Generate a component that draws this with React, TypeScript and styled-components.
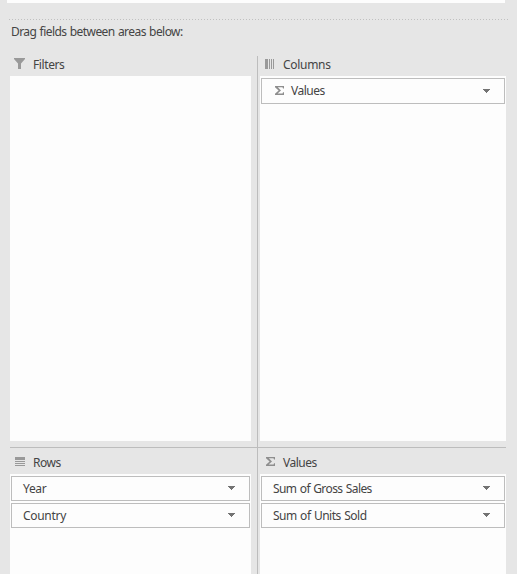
import React from "react";
import styled, { createGlobalStyle } from "styled-components";

const GlobalStyle = createGlobalStyle`
  *, *::before, *::after { box-sizing: border-box; }
  html, body { margin: 0; background: #e6e6e6; overflow: hidden; }
  body { font: 12px/16px "Noto Sans", sans-serif; color: #444; }
  svg { display: block; flex: none; }
`;

const Pane = styled.main`
  height: 574px;
  display: flex;
  flex-direction: column;
  background: #e6e6e6;
  overflow: hidden;
`;

const FieldListEdge = styled.div`
  flex: none;
  width: 498px;
  height: 3px;
  margin-left: 7px;
  background: #fdfdfd;
`;

const DottedRule = styled.div`
  flex: none;
  height: 1px;
  width: 499px;
  margin: 16px 0 0 9px;
  background: repeating-linear-gradient(90deg, #c0c0c0 0 1px, transparent 1px 3px);
`;

const Label = styled.span<{ $track?: number }>`
  letter-spacing: ${(p) => p.$track ?? -0.3}px;
  word-spacing: 0.7px;
  white-space: nowrap;
`;

const Hint = styled.div`
  flex: none;
  height: 36px;
  padding: 4px 0 0 11px;
`;

const Areas = styled.div`
  flex: 1;
  min-height: 0;
  display: grid;
  grid-template-columns: 248px 248px;
  grid-template-rows: 392px 1fr;
  margin-left: 10px;
`;

const Area = styled.section<{ $left?: boolean; $top?: boolean }>`
  display: flex;
  flex-direction: column;
  min-height: 0;
  padding: 0 ${(p) => (p.$left ? 6 : 0)}px ${(p) => (p.$top ? 6 : 0)}px ${(p) => (p.$left ? 0 : 2)}px;
  border-right: ${(p) => (p.$left ? "1px solid #bdbdbd" : "0")};
  border-bottom: ${(p) => (p.$top ? "1px solid #bdbdbd" : "0")};
`;

const AreaHeader = styled.header<{ $height: number }>`
  flex: none;
  display: flex;
  align-items: flex-start;
  height: ${(p) => p.$height}px;
`;

const HeaderIcon = styled.span<{ $inset: number; $top: number }>`
  width: 23px;
  padding: ${(p) => p.$top}px 0 0 ${(p) => p.$inset}px;
`;

const HeaderText = styled.span<{ $top: number }>`
  padding-top: ${(p) => p.$top}px;
`;

const DropZone = styled.div`
  flex: 1;
  min-height: 0;
  display: flex;
  flex-direction: column;
  gap: 2px;
  padding: 2px 1px;
  background: #fdfdfd;
`;

const Chip = styled.div<{ $height: number }>`
  flex: none;
  height: ${(p) => p.$height}px;
  display: flex;
  align-items: flex-start;
  border: 1px solid #bdbdbd;
  padding: 4px 14px 0 11px;
`;

const ChipIcon = styled.span`
  padding: 3px 7px 0 2px;
`;

const ChipArrow = styled.span<{ $top: number }>`
  margin-left: auto;
  padding-top: ${(p) => p.$top}px;
`;

const FilterIcon = () => (
  <svg width="12" height="12" viewBox="0 0 12 12" fill="#999">
    <path d="M0 0h11v1L7 5.5V11H4V5.5L0 1z" />
  </svg>
);

const ColumnsIcon = () => (
  <svg width="10" height="10" viewBox="0 0 10 10" fill="#999" shapeRendering="crispEdges">
    <path d="M0 0h3v10H0zM4 0h1v10H4zM6 0h1v10H6zM8 0h1v10H8z" />
  </svg>
);

const RowsIcon = () => (
  <svg width="10" height="10" viewBox="0 0 10 10" fill="#999" shapeRendering="crispEdges">
    <path d="M0 0h10v3H0zM0 4h10v1H0zM0 6h10v1H0zM0 8h10v1H0z" />
  </svg>
);

const SigmaIcon = () => (
  <svg width="9" height="9" viewBox="0 0 9 9" fill="#8e8e8e">
    <path d="M0 0h9v2.5H8L7.5 1.3H2.8L6 4.4 2.6 7.5h5L8 6.3h1V9H0V7.7l3.6-3.3L0 1.2z" />
  </svg>
);

const Arrow = () => (
  <svg width="7" height="4" viewBox="0 0 7 4" fill="#737373" shapeRendering="crispEdges">
    <path d="M0 0h7v1H0zM1 1h5v1H1zM2 2h3v1H2zM3 3h1v1H3z" />
  </svg>
);

interface Field {
  name: string;
  sigma?: boolean;
  track?: number;
}

interface AreaProps {
  title: string;
  icon: React.ReactNode;
  inset: number;
  iconTop: number;
  track?: number;
  left?: boolean;
  top?: boolean;
  fields: Field[];
}

const FieldArea = ({ title, icon, inset, iconTop, track, left, top, fields }: AreaProps) => (
  <Area $left={left} $top={top}>
    <AreaHeader $height={top ? 20 : 26}>
      <HeaderIcon $inset={inset} $top={iconTop}>{icon}</HeaderIcon>
      <HeaderText $top={top ? 1 : 7}><Label $track={track}>{title}</Label></HeaderText>
    </AreaHeader>
    <DropZone>
      {fields.map((f) => (
        <Chip key={f.name} $height={top ? 26 : 25}>
          {f.sigma && <ChipIcon><SigmaIcon /></ChipIcon>}
          <Label $track={f.track}>{f.name}</Label>
          <ChipArrow $top={top ? 6 : 5}><Arrow /></ChipArrow>
        </Chip>
      ))}
    </DropZone>
  </Area>
);

export default function App() {
  return (
    <Pane>
      <GlobalStyle />
      <FieldListEdge />
      <DottedRule />
      <Hint><Label $track={-0.56}>Drag fields between areas below:</Label></Hint>
      <Areas>
        <FieldArea left top title="Filters" track={-0.4} icon={<FilterIcon />} inset={4} iconTop={2} fields={[]} />
        <FieldArea top title="Columns" icon={<ColumnsIcon />} inset={5} iconTop={3} fields={[{ name: "Values", sigma: true, track: -0.5 }]} />
        <FieldArea left title="Rows" track={-0.45} icon={<RowsIcon />} inset={5} iconTop={9} fields={[{ name: "Year" }, { name: "Country" }]} />
        <FieldArea
          title="Values"
          track={-0.5}
          icon={<SigmaIcon />}
          inset={6}
          iconTop={9}
          fields={[{ name: "Sum of Gross Sales", track: -0.58 }, { name: "Sum of Units Sold", track: -0.48 }]}
        />
      </Areas>
    </Pane>
  );
}
